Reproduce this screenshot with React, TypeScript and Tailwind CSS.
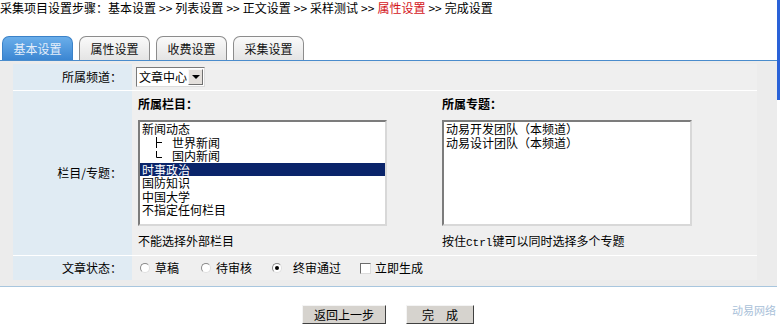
import React from 'react';

const font = { fontFamily: '"Noto Sans CJK SC", "Liberation Sans", sans-serif' };

const tabs = ['基本设置', '属性设置', '收费设置', '采集设置'];
const columns: { name: string; branch?: 'mid' | 'end' }[] = [
  { name: '新闻动态' },
  { name: '世界新闻', branch: 'mid' },
  { name: '国内新闻', branch: 'end' },
  { name: '时事政治' },
  { name: '国防知识' },
  { name: '中国大学' },
  { name: '不指定任何栏目' },
];
const specials = ['动易开发团队（本频道）', '动易设计团队（本频道）'];
const steps = ['基本设置', '列表设置', '正文设置', '采样测试', '属性设置', '完成设置'];

function Branch({ end }: { end?: boolean }) {
  return (
    <svg width="30" height="13" viewBox="0 0 30 13" className="shrink-0">
      <path d={end ? 'M14.5 2v6.5H20' : 'M14.5 1v11M14.5 6.5H20'} stroke="#000" strokeWidth="1" fill="none" />
    </svg>
  );
}

function Radio({ checked, label, className = '' }: { checked?: boolean; label: string; className?: string }) {
  return (
    <span className={`flex items-center gap-[5px] ${className}`}>
      <span className="w-[10px] h-[10px] rounded-full border border-[#8a8a8a] border-r-[#e0e0e0] border-b-[#e0e0e0] bg-white flex items-center justify-center">
        {checked && <span className="w-[4px] h-[4px] rounded-full bg-black" />}
      </span>
      <span className={checked ? 'ml-[6px]' : ''}>{label}</span>
    </span>
  );
}

export default function App() {
  return (
    <div className="w-[780px] h-[324px] bg-white relative overflow-hidden text-[12px] text-black leading-none" style={font}>
      {/* steps */}
      <div className="h-[36px] pt-[2px] flex whitespace-pre">
        <span>采集项目设置步骤：</span>
        {steps.map((s, i) => (
          <React.Fragment key={s}>
            {i > 0 && <span className="px-[3px]">&gt;&gt;</span>}
            <span className={s === '属性设置' ? 'text-[#d4141a]' : ''}>{s}</span>
          </React.Fragment>
        ))}
      </div>

      {/* tabs */}
      <div className="flex items-end gap-[6px] pl-[2px] h-[24px]">
        {tabs.map((t, i) => (
          <div
            key={t}
            className={`w-[71px] h-[24px] rounded-t-[7px] flex items-center justify-center border border-b-0 ${
              i === 0
                ? 'bg-gradient-to-b from-[#6aaeea] to-[#3b86d2] border-[#3b82c8] text-[#e4eefa]'
                : 'bg-gradient-to-b from-[#fafafa] to-[#e4e4e4] border-[#8c8c8c] text-[#111]'
            }`}
          >
            {t}
          </div>
        ))}
      </div>

      {/* panel */}
      <div className="border-t border-[#4a8ccc] border-b border-b-[#a8c6de] bg-[#ececec] pl-[13px] pr-[20px] pt-[3px] pb-[6px] w-[777px]">
        <div className="flex flex-col gap-[1px] bg-white">
          {/* channel */}
          <div className="flex h-[26px]">
            <div className="w-[119px] bg-[#e0ebf3] flex items-center justify-end pr-[10px]">所属频道：</div>
            <div className="flex-1 bg-[#efefef] flex items-center pl-[4px]">
              <div className="h-[20px] w-[69px] flex items-center border border-[#7a7a7a] border-r-[#dcdcdc] border-b-[#dcdcdc] bg-white">
                <span className="flex-1 pl-[2px]">文章中心</span>
                <span className="w-[15px] h-[16px] mr-[1px] bg-[#e4e0dc] border border-[#f8f8f8] border-r-[#707070] border-b-[#707070] flex items-center justify-center">
                  <span className="w-0 h-0 border-l-[4px] border-r-[4px] border-t-[4px] border-l-transparent border-r-transparent border-t-black" />
                </span>
              </div>
            </div>
          </div>

          {/* columns / specials */}
          <div className="flex h-[164px]">
            <div className="w-[119px] bg-[#e0ebf3] flex items-center justify-end pr-[10px]">栏目/专题：</div>
            <div className="flex-1 bg-[#efefef] flex pl-[6px] pt-[7px]">
              <div className="w-[304px]">
                <div className="font-bold h-[22px]">所属栏目：</div>
                <div className="w-[249px] h-[106px] bg-white border-2 border-[#7c7c7c] border-r-[#d8d8d8] border-b-[#d8d8d8] overflow-hidden">
                  {columns.map((c, i) => (
                    <div
                      key={c.name}
                      className={`h-[13.5px] leading-[13.5px] flex items-center pl-[2px] ${i === 3 ? 'bg-[#0a246a] text-white' : ''}`}
                    >
                      {c.branch && <Branch end={c.branch === 'end'} />}
                      {c.name}
                    </div>
                  ))}
                </div>
                <div className="mt-[9px]">不能选择外部栏目</div>
              </div>
              <div>
                <div className="font-bold h-[22px]">所属专题：</div>
                <div className="w-[250px] h-[106px] bg-white border-2 border-[#7c7c7c] border-r-[#d8d8d8] border-b-[#d8d8d8] pl-[2px]">
                  {specials.map(s => (
                    <div key={s} className="h-[13.5px] leading-[13.5px]">{s}</div>
                  ))}
                </div>
                <div className="mt-[9px]">
                  按住<span style={{ fontFamily: '"Liberation Mono", monospace' }} className="text-[11px]">Ctrl</span>键可以同时选择多个专题
                </div>
              </div>
            </div>
          </div>

          {/* status */}
          <div className="flex h-[24px]">
            <div className="w-[119px] bg-[#e0ebf3] flex items-center justify-end pr-[10px]">文章状态：</div>
            <div className="flex-1 bg-[#efefef] flex items-center pl-[8px]">
              <Radio label="草稿" className="w-[61px]" />
              <Radio label="待审核" className="w-[71px]" />
              <Radio label="终审通过" checked className="w-[88px]" />
              <span className="flex items-center gap-[4px]">
                <span className="w-[11px] h-[11px] border border-[#6c6c6c] border-r-[#dcdcdc] border-b-[#dcdcdc] bg-white" />
                立即生成
              </span>
            </div>
          </div>
        </div>
      </div>

      {/* buttons */}
      <div className="flex justify-center gap-[20px] pt-[18px] pr-[4px]">
        <button className="w-[84px] h-[19px] bg-[#d6d3ce] border border-[#f4f4f4] border-r-[#404040] border-b-[#404040] flex items-center justify-center">
          返回上一步
        </button>
        <button className="w-[68px] h-[19px] bg-[#d6d3ce] border border-[#f4f4f4] border-r-[#404040] border-b-[#404040] flex items-center justify-center whitespace-pre">
          完　成
        </button>
      </div>

      {/* watermark */}
      <div className="absolute right-[4px] bottom-[8px] text-[11px] text-[#a9c1d9]">动易网络</div>

      {/* window edge */}
      <div className="absolute right-0 top-0 w-[3px] h-[100px] bg-[#2a62d8]" />
    </div>
  );
}
